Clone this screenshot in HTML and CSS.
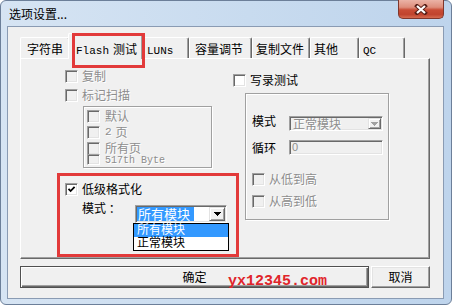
FILE: index.html
```html
<!DOCTYPE html>
<html lang="zh-CN">
<head>
<meta charset="utf-8">
<title>选项设置...</title>
<link rel="stylesheet" href="styles.css">
</head>
<body>
<div class="window">
  <div class="titlebar">
    <span class="title">选项设置...</span>
    <button class="close" aria-label="关闭">
      <svg width="14" height="11" viewBox="0 0 14 11"><path d="M3 2 L11 9 M11 2 L3 9" stroke="#5a1f17" stroke-width="4" stroke-linecap="square" fill="none"/><path d="M3 2 L11 9 M11 2 L3 9" stroke="#fff" stroke-width="2.2" fill="none"/></svg>
    </button>
  </div>
  <div class="client">
    <div class="tabs">
      <div class="tab">字符串</div>
      <div class="tab active"><span class="mono sp">Flash</span>测试</div>
      <div class="tab"><span class="mono">LUNs</span></div>
      <div class="tab">容量调节</div>
      <div class="tab">复制文件</div>
      <div class="tab">其他</div>
      <div class="tab"><span class="mono">QC</span></div>
    </div>
    <div class="panel">
      <div class="col-left">
        <div class="row disabled"><span class="cb"></span>复制</div>
        <div class="row disabled"><span class="cb"></span>标记扫描</div>
        <div class="sub disabled">
          <div class="srow"><span class="cb"></span>默认</div>
          <div class="srow"><span class="cb"></span><span class="mono sp">2</span>页</div>
          <div class="srow"><span class="cb"></span>所有页</div>
          <div class="srow last"><span class="cb"></span><span class="mono small">517th Byte</span></div>
        </div>
        <div class="fmt">
          <div class="row"><span class="cb white"><svg width="9" height="9" viewBox="0 0 9 9"><path d="M1.5 3.8 L3.6 6 L7.6 1.8" stroke="#000" stroke-width="1.8" fill="none"/></svg></span>低级格式化</div>
          <div class="mode-row">
            <span class="mlabel">模式 ：</span>
            <div class="combo">
              <span class="combo-text"><span class="sel">所有模块</span></span>
              <span class="combo-btn"><svg width="7" height="4" viewBox="0 0 7 4"><path d="M0 0H7V1H6V2H5V3H4V4H3V3H2V2H1V1H0Z" fill="#000"/></svg></span>
              <ul class="droplist">
                <li class="hl">所有模块</li>
                <li>正常模块</li>
              </ul>
            </div>
          </div>
        </div>
      </div>
      <div class="col-right">
        <div class="row"><span class="cb white"></span>写录测试</div>
        <div class="write">
          <div class="frow frow1">
            <span class="flabel">模式</span>
            <div class="combo dis">
              <span class="combo-text">正常模块</span>
              <span class="combo-btn small"><svg width="7" height="4" viewBox="0 0 7 4"><path d="M0 0H7V1H6V2H5V3H4V4H3V3H2V2H1V1H0Z" fill="#a0a0a0"/></svg></span>
            </div>
          </div>
          <div class="frow frow2">
            <span class="flabel">循环</span>
            <div class="edit">0</div>
          </div>
          <div class="row disabled r3"><span class="cb"></span>从低到高</div>
          <div class="row disabled r4"><span class="cb"></span>从高到低</div>
        </div>
      </div>
    </div>
    <div class="buttons">
      <button class="btn ok">确定<span class="watermark">yx12345.com</span></button>
      <button class="btn cancel">取消</button>
    </div>
  </div>
</div>
</body>
</html>
```
FILE: styles.css
```css
* { box-sizing: border-box; }
html, body { margin: 0; padding: 0; }
body {
  width: 452px;
  height: 305px;
  overflow: hidden;
  background: #fff;
  font-family: "Noto Sans CJK SC", "Noto Sans", sans-serif;
  font-size: 12px;
  color: #000;
}
.window {
  width: 452px;
  height: 305px;
  border: 1px solid #6c7f99;
  border-radius: 6px;
  background: linear-gradient(90deg, #d6e4f3 0%, #c8dbef 55%, #bed4ec 100%);
  padding: 0 7px 5px 6px;
  display: flex;
  flex-direction: column;
}
.titlebar {
  height: 25px;
  display: flex;
  align-items: flex-start;
  justify-content: space-between;
  flex: none;
}
.title {
  margin: 6px 0 0 2px;
  line-height: 13px;
  font-size: 12px;
}
.close {
  width: 46px;
  height: 19px;
  margin-top: -1px;
  padding: 0;
  border: 1px solid #80362b;
  border-top: none;
  border-radius: 0 0 5px 5px;
  background: linear-gradient(#ebb3a6 0%, #de8e7c 40%, #c94c35 55%, #c0432d 80%, #d56b50 100%);
  display: flex;
  align-items: center;
  justify-content: center;
}
.client {
  flex: 1;
  border: 1px solid #8a9bb3;
  background: #f0f0f0;
  padding: 6px 12px 10px 12px;
  display: flex;
  flex-direction: column;
}
.mono { font-family: "Liberation Mono", monospace; font-size: 11px; }
.mono.small { font-size: 10px; }
.mono.sp { margin-right: 4px; }

/* tabs */
.tabs {
  display: flex;
  align-items: flex-end;
  height: 25px;
  position: relative;
  z-index: 1;
  flex: none;
}
.tab {
  height: 21px;
  padding: 3px 0 0 3px;
  line-height: 16px;
  border-top: 1px solid #fff;
  border-left: 1px solid #fff;
  border-right: 1px solid #696969;
  box-shadow: inset -1px 0 #a0a0a0;
  border-radius: 2px 2px 0 0;
  white-space: nowrap;
  background: #f0f0f0;
}
.tab:nth-child(1) { width: 50px; padding-left: 6px; }
.tab:nth-child(2) { width: 75px; }
.tab:nth-child(3) { width: 46px; }
.tab:nth-child(4) { width: 63px; padding-left: 5px; }
.tab:nth-child(5) { width: 58px; }
.tab:nth-child(6) { width: 49px; }
.tab:nth-child(7) { width: 46px; }
.tab.active {
  position: relative;
  height: 26px;
  margin-bottom: -1px;
  margin-left: -2px;
  padding-top: 7px;
  padding-left: 7px;
}
.tab.active::after {
  content: "";
  position: absolute;
  left: 3px;
  top: -1px;
  width: 67px;
  height: 29px;
  border: 3px solid #e23a3a;
}

/* panel */
.panel {
  width: 410px;
  height: 201px;
  flex: none;
  border-top: 1px solid #fff;
  border-left: 1px solid #fff;
  border-right: 1px solid #696969;
  border-bottom: 1px solid #696969;
  box-shadow: inset -1px -1px #a0a0a0;
  display: grid;
  grid-template-columns: 176px 1fr;
  align-items: start;
  padding-left: 36px;
}
.row {
  display: flex;
  align-items: center;
  height: 16px;
  line-height: 16px;
  white-space: nowrap;
}
.disabled { color: #8d8d8d; text-shadow: 1px 1px 0 #fff; }
.cb {
  width: 13px;
  height: 13px;
  flex: none;
  border-style: solid;
  border-width: 1px;
  border-color: #a0a0a0 #fff #fff #a0a0a0;
  box-shadow: inset 1px 1px #696969, inset -1px -1px #e3e3e3;
  background: #f0f0f0;
  margin-right: 4px;
  display: flex;
  align-items: center;
  justify-content: center;
}
.cb.white { background: #fff; }

.col-left {
  padding-top: 9px;
  display: flex;
  flex-direction: column;
  align-items: flex-start;
}
.col-left > .row { padding-left: 8px; }
.col-left > .row + .row { margin-top: 3px; }
.sub {
  margin: 3px 0 0 26px;
  width: 129px;
  height: 62px;
  border: 1px solid #a0a0a0;
  box-shadow: 1px 1px 0 #fff, inset 1px 1px 0 #fff;
  padding: 1px 0 0 3px;
  overflow: hidden;
}
.srow {
  display: flex;
  align-items: center;
  height: 16px;
  line-height: 16px;
  white-space: nowrap;
}
.srow .cb { margin-right: 5px; }
.srow.last { margin-top: -2px; height: 13px; line-height: 13px; }
.srow.last .cb { height: 11px; align-self: flex-start; }

.fmt {
  margin-top: 5px;
  width: 182px;
  height: 84px;
  flex: none;
  border: 3px solid #e23a3a;
  padding: 5px 0 0 5px;
}
.mode-row {
  display: flex;
  align-items: flex-start;
  margin-top: 3px;
}
.mlabel {
  width: 70px;
  padding-left: 17px;
  line-height: 16px;
  white-space: nowrap;
  flex: none;
}
.combo {
  position: relative;
  margin-top: 5px;
  width: 92px;
  height: 18px;
  border-style: solid;
  border-width: 1px;
  border-color: #a0a0a0 #fff #fff #a0a0a0;
  box-shadow: inset 1px 1px #696969, inset -1px -1px #e3e3e3;
  background: #fff;
  padding: 1px;
  display: flex;
  align-items: stretch;
}
.combo-text {
  flex: 1;
  font-size: 13px;
  line-height: 14px;
  white-space: nowrap;
}
.sel {
  display: inline-block;
  background: #3399ff;
  color: #fff;
  padding: 0 4px 0 1px;
  height: 14px;
}
.combo-btn {
  width: 16px;
  height: 14px;
  flex: none;
  border-style: solid;
  border-width: 1px;
  border-color: #e3e3e3 #696969 #696969 #e3e3e3;
  box-shadow: inset 1px 1px #fff, inset -1px -1px #a0a0a0;
  background: #f0f0f0;
  display: flex;
  align-items: center;
  justify-content: center;
}
.combo-btn.small { width: 13px; height: 11px; }
.droplist {
  position: absolute;
  top: calc(100% + 1px);
  left: -3px;
  width: 96px;
  margin: 0;
  padding: 0;
  list-style: none;
  border: 1px solid #000;
  background: #fff;
  font-family: "Liberation Sans", "Noto Sans CJK SC", sans-serif;
  font-size: 12px;
  line-height: 13px;
  z-index: 2;
}
.droplist li {
  height: 13px;
  padding-left: 3px;
  white-space: nowrap;
}
.droplist li.hl { background: #3399ff; color: #fff; }

.col-right {
  padding-top: 13px;
  display: flex;
  flex-direction: column;
  align-items: flex-start;
}
.write {
  margin: 5px 0 0 12px;
  width: 144px;
  height: 127px;
  border: 1px solid #a0a0a0;
  box-shadow: 1px 1px 0 #fff, inset 1px 1px 0 #fff;
  padding: 20px 0 0 6px;
}
.frow {
  display: flex;
  align-items: flex-start;
}
.frow2 { margin-top: 9px; }
.flabel {
  width: 37px;
  line-height: 12px;
  flex: none;
}
.frow1 .flabel { margin-top: 1px; }
.frow2 .flabel { margin-top: 2px; }
.combo.dis {
  margin-top: 2px;
  width: 94px;
  height: 15px;
  background: #f0f0f0;
}
.combo.dis .combo-text {
  font-size: 12px;
  line-height: 11px;
  padding-left: 2px;
  color: #8d8d8d;
  text-shadow: 1px 1px 0 #fff;
}
.edit {
  width: 94px;
  height: 15px;
  border-style: solid;
  border-width: 1px;
  border-color: #a0a0a0 #fff #fff #a0a0a0;
  box-shadow: inset 1px 1px #696969, inset -1px -1px #e3e3e3;
  background: #f0f0f0;
  padding: 1px 0 0 2px;
  font-family: "Liberation Sans", sans-serif;
  font-size: 11px;
  line-height: 11px;
  color: #8d8d8d;
}
.write .r3 { margin-top: 16px; }
.write .r4 { margin-top: 6px; }

/* buttons */
.buttons {
  display: flex;
  gap: 2px;
  margin-top: 7px;
  height: 22px;
  flex: none;
}
.btn {
  height: 22px;
  font-family: "Noto Sans CJK SC", sans-serif;
  font-size: 12px;
  line-height: 16px;
  color: #000;
  background: #f0f0f0;
  padding: 0;
  position: relative;
  border-style: solid;
  border-width: 1px;
  border-color: #fff #696969 #696969 #fff;
  box-shadow: inset -1px -1px #a0a0a0, inset 1px 1px #e3e3e3;
}
.btn.ok {
  width: 349px;
  border-color: #505050;
  box-shadow: inset 1px 1px #fff, inset -1px -1px #696969, inset -2px -2px #a0a0a0;
}
.btn.cancel { width: 59px; }
.watermark {
  position: absolute;
  left: 207px;
  top: 7px;
  font-family: "Liberation Mono", monospace;
  font-weight: bold;
  font-size: 15px;
  line-height: 15px;
  color: #e0242a;
  white-space: nowrap;
}
```
